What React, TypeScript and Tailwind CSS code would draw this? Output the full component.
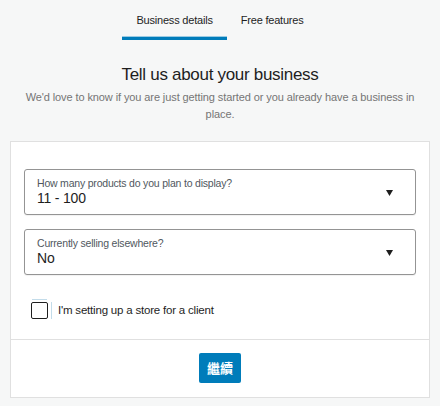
import React from 'react';

const FONT = { fontFamily: '"Liberation Sans", "Noto Sans CJK TC", sans-serif' };

function SelectField({ label, value }: { label: string; value: string }) {
  return (
    <div className="flex h-[46px] items-center rounded-[3px] border border-[#949494] bg-white pl-3 pr-[22px] shadow-[0_1px_1px_rgba(0,0,0,0.06)]">
      <div className="flex flex-1 flex-col">
        <span className="text-[10.5px] leading-[13px] tracking-[-0.2px] text-[#50575e]">{label}</span>
        <span className="text-[14px] leading-[17px] tracking-[-0.2px] text-[#1e1e1e]">{value}</span>
      </div>
      <svg width="7" height="6" viewBox="0 0 7 6" className="mt-[1px]">
        <path d="M0 0H7L3.5 6Z" fill="#1e1e1e" />
      </svg>
    </div>
  );
}

export default function App() {
  return (
    <div className="min-h-[406px] w-[440px] bg-[#f6f7f7]" style={FONT}>
      <div className="flex justify-center pt-[12px]">
        <div className="relative px-[14px] pb-[8px] text-[11px] leading-[17px] tracking-[-0.2px] text-[#1e1e1e]">
          Business details
          <div className="absolute bottom-[-3px] left-0 right-0 h-[4px] border-t border-[#9ccbe3] bg-[#007cba]" />
        </div>
        <div className="px-[14px] pb-[8px] text-[11px] leading-[17px] tracking-[-0.2px] text-[#1e1e1e]">Free features</div>
      </div>

      <div className="pt-[26px] text-center">
        <h1 className="text-[17px] leading-[24px] tracking-[-0.3px] text-[#1e1e1e]">Tell us about your business</h1>
        <p className="mx-auto mt-[2px] w-[410px] text-[11px] leading-[17px] tracking-[-0.1px] text-[#757575]">
          We'd love to know if you are just getting started or you already have a business in place.
        </p>
      </div>

      <div className="mx-[10px] mt-[18px] border border-[#e0e0e0] bg-white">
        <div className="flex flex-col gap-[14px] px-[13px] pt-[27px]">
          <SelectField label="How many products do you plan to display?" value="11 - 100" />
          <SelectField label="Currently selling elsewhere?" value="No" />
        </div>
        <div className="flex items-center px-[20px] pb-[20px] pt-[27px]">
          <div className="relative h-[17px] w-[17px] rounded-[2px] border-[1.5px] border-[#1e1e1e]">
            <div className="absolute left-0 right-0 top-[-4px] h-px bg-[#c3dcea]" />
          </div>
          <div className="ml-[3px] h-[17px] w-px bg-[#c3dcea]" />
          <span className="ml-[6px] text-[11.5px] tracking-[-0.2px] text-[#1e1e1e]">I'm setting up a store for a client</span>
        </div>
        <div className="flex justify-center border-t border-[#e0e0e0] pb-[14px] pt-[13px]">
          <button className="h-[30px] w-[42px] rounded-[2px] bg-[#007cba] text-[13px] font-semibold text-white">
            繼續
          </button>
        </div>
      </div>
    </div>
  );
}
